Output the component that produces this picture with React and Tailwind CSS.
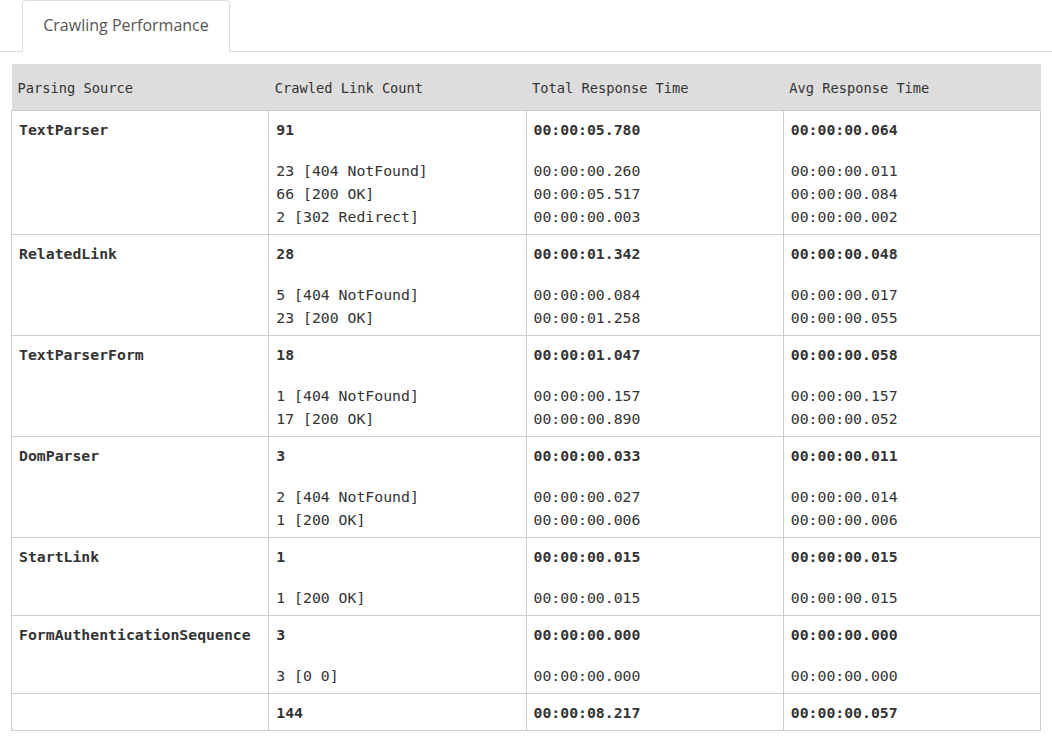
const rows = [
    {
        source: 'TextParser',
        count: '91',
        total: '00:00:05.780',
        avg: '00:00:00.064',
        details: [
            ['23 [404 NotFound]', '00:00:00.260', '00:00:00.011'],
            ['66 [200 OK]', '00:00:05.517', '00:00:00.084'],
            ['2 [302 Redirect]', '00:00:00.003', '00:00:00.002'],
        ],
    },
    {
        source: 'RelatedLink',
        count: '28',
        total: '00:00:01.342',
        avg: '00:00:00.048',
        details: [
            ['5 [404 NotFound]', '00:00:00.084', '00:00:00.017'],
            ['23 [200 OK]', '00:00:01.258', '00:00:00.055'],
        ],
    },
    {
        source: 'TextParserForm',
        count: '18',
        total: '00:00:01.047',
        avg: '00:00:00.058',
        details: [
            ['1 [404 NotFound]', '00:00:00.157', '00:00:00.157'],
            ['17 [200 OK]', '00:00:00.890', '00:00:00.052'],
        ],
    },
    {
        source: 'DomParser',
        count: '3',
        total: '00:00:00.033',
        avg: '00:00:00.011',
        details: [
            ['2 [404 NotFound]', '00:00:00.027', '00:00:00.014'],
            ['1 [200 OK]', '00:00:00.006', '00:00:00.006'],
        ],
    },
    {
        source: 'StartLink',
        count: '1',
        total: '00:00:00.015',
        avg: '00:00:00.015',
        details: [['1 [200 OK]', '00:00:00.015', '00:00:00.015']],
    },
    {
        source: 'FormAuthenticationSequence',
        count: '3',
        total: '00:00:00.000',
        avg: '00:00:00.000',
        details: [['3 [0 0]', '00:00:00.000', '00:00:00.000']],
    },
];

const mono = "font-['DejaVu_Sans_Mono','Liberation_Mono',monospace]";

// Cell with a bold headline and optional breakdown lines
const Cell = ({ head, lines = [] }) => (
    <td className="border border-[#cccccc] align-top pl-[7px] pr-2 pt-[7px] pb-[6px] text-[14.8px]">
        <div className="font-bold leading-[23px]">{head}</div>
        {lines.length > 0 && (
            <div className="mt-[18px]">
                {lines.map((l, i) => (
                    <div key={i} className="leading-[23px]">{l}</div>
                ))}
            </div>
        )}
    </td>
);

export default function App() {
    return (
        <div className="w-[1052px] h-[744px] bg-white text-[#333333] overflow-hidden">
            {/* Tabs */}
            <div className="flex border-b border-[#dddddd] pl-[22px] h-[52px]">
                <div className="w-[208px] h-[52px] -mb-px pb-[2px] bg-white border border-[#dddddd] border-b-white rounded-t-[4px] flex items-center justify-center font-['Open_Sans',sans-serif] text-[16px] text-[#555555]">
                    Crawling Performance
                </div>
            </div>

            {/* Table */}
            <div className="pl-[11px] pt-3">
                <table className={`w-[1030px] table-fixed border-collapse ${mono}`}>
                    <thead>
                        <tr className="bg-[#dddddd] h-[46px]">
                            {['Parsing Source', 'Crawled Link Count', 'Total Response Time', 'Avg Response Time'].map((h) => (
                                <th key={h} className="text-left font-normal text-[13.7px] pl-[6px] pt-[3px] border-b border-[#cccccc]">
                                    {h}
                                </th>
                            ))}
                        </tr>
                    </thead>
                    <tbody>
                        {rows.map((r) => (
                            <tr key={r.source}>
                                <Cell head={r.source} />
                                <Cell head={r.count} lines={r.details.map((d) => d[0])} />
                                <Cell head={r.total} lines={r.details.map((d) => d[1])} />
                                <Cell head={r.avg} lines={r.details.map((d) => d[2])} />
                            </tr>
                        ))}
                        <tr>
                            <Cell head="" />
                            <Cell head="144" />
                            <Cell head="00:00:08.217" />
                            <Cell head="00:00:00.057" />
                        </tr>
                    </tbody>
                </table>
            </div>
        </div>
    );
}
